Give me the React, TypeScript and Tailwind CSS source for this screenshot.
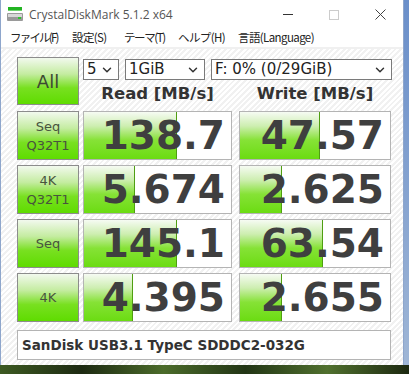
import { ChevronDown } from 'lucide-react'

const rows = [
  { label: ['Seq', 'Q32T1'], read: '138.7', readPct: 63, write: '47.57', writePct: 53 },
  { label: ['4K', 'Q32T1'], read: '5.674', readPct: 35, write: '2.625', writePct: 28 },
  { label: ['Seq'], read: '145.1', readPct: 63, write: '63.54', writePct: 55 },
  { label: ['4K'], read: '4.395', readPct: 33, write: '2.655', writePct: 28 },
]

const menu = [
  { t: 'ファイル(F)', w: 'w-[62px] tracking-[-1.8px]' },
  { t: '設定(S)', w: 'w-[52px] tracking-[-0.6px]' },
  { t: 'テーマ(T)', w: 'w-[54px] tracking-[-1.4px]' },
  { t: 'ヘルプ(H)', w: 'w-[60px] tracking-[-0.6px]' },
  { t: '言語(Language)', w: 'w-[100px] tracking-[-0.6px]' },
]

const greenBtn =
  'bg-[linear-gradient(to_bottom,#f2f9ee_0%,#c4eca0_35%,#78e020_65%,#5fdc00_100%)] border border-[#8c8c8c]'

function DriveIcon() {
  return (
    <svg width="16" height="15" viewBox="0 0 16 15">
      <rect x="1" y="0" width="14" height="3" fill="#22b422" />
      <rect x="1" y="3" width="14" height="1" fill="#6fd36f" />
      <rect x="0" y="6" width="16" height="8" rx="1" fill="#9a9a9a" />
      <rect x="1" y="7" width="14" height="3" fill="#d8d8d8" />
      <rect x="11" y="10" width="3" height="2" fill="#2fc52f" />
    </svg>
  )
}

function Select({ w, text }: { w: string; text: string }) {
  return (
    <div className={`${w} h-[21px] bg-white border border-[#7a7a7a] flex items-center justify-between pl-[3px] pr-[4px] text-[15px] text-[#222] font-['DejaVu_Sans',sans-serif]`}>
      <span className="leading-none">{text}</span>
      <ChevronDown size={14} strokeWidth={2.5} className="text-[#333]" />
    </div>
  )
}

function Cell({ value, pct, w }: { value: string; pct: number; w: string }) {
  return (
    <div className={`${w} h-[49px] relative bg-white border border-[#b4b4b4] overflow-hidden`}>
      <div
        className="absolute left-0 top-0 bottom-0 bg-[linear-gradient(to_bottom,#f6fbf3_0%,#cdeeb0_30%,#86e236_60%,#6bdc12_100%)] border-r border-[#4f9e12]"
        style={{ width: `${pct}%` }}
      />
      <div className="relative h-full flex items-center justify-end pr-[6px] text-[39px] font-bold text-[#3f3f3f] leading-none font-['DejaVu_Sans',sans-serif]">
        {value}
      </div>
    </div>
  )
}

export default function App() {
  return (
    <div className="w-[409px] h-[374px] flex flex-col bg-[#6f92c6] overflow-hidden">
      <div className="flex">
        <div className="w-[404px] h-[365px] flex flex-col bg-white border-l border-r border-[#8ea6cc]">
          {/* title bar */}
          <div className="h-[29px] flex items-center pl-[6px] shrink-0">
            <DriveIcon />
            <span className="ml-[6px] text-[12px] text-[#555] font-['Open_Sans',sans-serif]">
              CrystalDiskMark 5.1.2 x64
            </span>
            <div className="ml-auto flex items-center">
              <div className="w-[46px] flex justify-center">
                <div className="w-[10px] h-px bg-[#333]" />
              </div>
              <div className="w-[46px] flex justify-center">
                <div className="w-[10px] h-[10px] border border-[#ccc]" />
              </div>
              <div className="w-[46px] flex justify-center text-[#333]">
                <svg width="11" height="11" viewBox="0 0 11 11">
                  <path d="M0.5 0.5 L10.5 10.5 M10.5 0.5 L0.5 10.5" stroke="#444" strokeWidth="1" />
                </svg>
              </div>
            </div>
          </div>
          {/* menu bar */}
          <div className="h-[18px] flex items-center pl-[9px] text-[11.5px] text-[#222] font-['Noto_Sans_CJK_JP',sans-serif] shrink-0">
            {menu.map((m) => (
              <span key={m.t} className={`${m.w} shrink-0 leading-none whitespace-nowrap`}>{m.t}</span>
            ))}
          </div>
          <div className="h-[2px] bg-[#f0f0f0] shrink-0" />
          {/* content */}
          <div className="flex-1 bg-[repeating-linear-gradient(135deg,#ffffff_0px,#ffffff_2px,#f1f1f1_2px,#f1f1f1_4px)] pl-[16px] pt-[8px]">
            <div className="flex">
              <div className={`w-[62px] h-[48px] ${greenBtn} flex items-center justify-center text-[18px] text-[#3d4a33] font-['DejaVu_Sans',sans-serif]`}>
                All
              </div>
              <div className="ml-[4px] flex flex-col">
                <div className="flex items-center pt-[2px]">
                  <Select w="w-[36px]" text="5" />
                  <div className="w-[6px]" />
                  <Select w="w-[80px]" text="1GiB" />
                  <div className="w-[6px]" />
                  <Select w="w-[181px]" text="F: 0% (0/29GiB)" />
                </div>
                <div className="flex mt-[5px] text-[16.5px] font-bold text-[#333] font-['DejaVu_Sans',sans-serif] leading-none">
                  <div className="w-[149px] text-center pt-[1px]">Read [MB/s]</div>
                  <div className="w-[7px]" />
                  <div className="w-[152px] text-center pt-[1px]">Write [MB/s]</div>
                </div>
              </div>
            </div>
            <div className="mt-[6px] flex flex-col gap-[5px]">
              {rows.map((r) => (
                <div key={r.read} className="flex">
                  <div className={`w-[62px] h-[49px] ${greenBtn} flex flex-col items-center justify-center text-[13px] leading-[19px] text-[#48543e] font-['DejaVu_Sans',sans-serif]`}>
                    {r.label.map((l) => (
                      <span key={l}>{l}</span>
                    ))}
                  </div>
                  <div className="w-[4px]" />
                  <Cell value={r.read} pct={r.readPct} w="w-[149px]" />
                  <div className="w-[7px]" />
                  <Cell value={r.write} pct={r.writePct} w="w-[152px]" />
                </div>
              ))}
            </div>
            <div className="mt-[8px] w-[374px] h-[30px] bg-white border border-[#b4b4b4] flex items-center pl-[4px] text-[13.5px] font-bold text-[#333] font-['DejaVu_Sans',sans-serif]">
              SanDisk USB3.1 TypeC SDDDC2-032G
            </div>
          </div>
        </div>
        <div className="flex-1 h-[365px] bg-[linear-gradient(to_bottom,#6a8fca,#9fb6d6)]" />
      </div>
      <div className="flex-1 bg-[linear-gradient(to_right,#3d5a22,#1d2a12,#4b6b2a,#223515,#50702e,#1c2810)]" />
    </div>
  )
}
